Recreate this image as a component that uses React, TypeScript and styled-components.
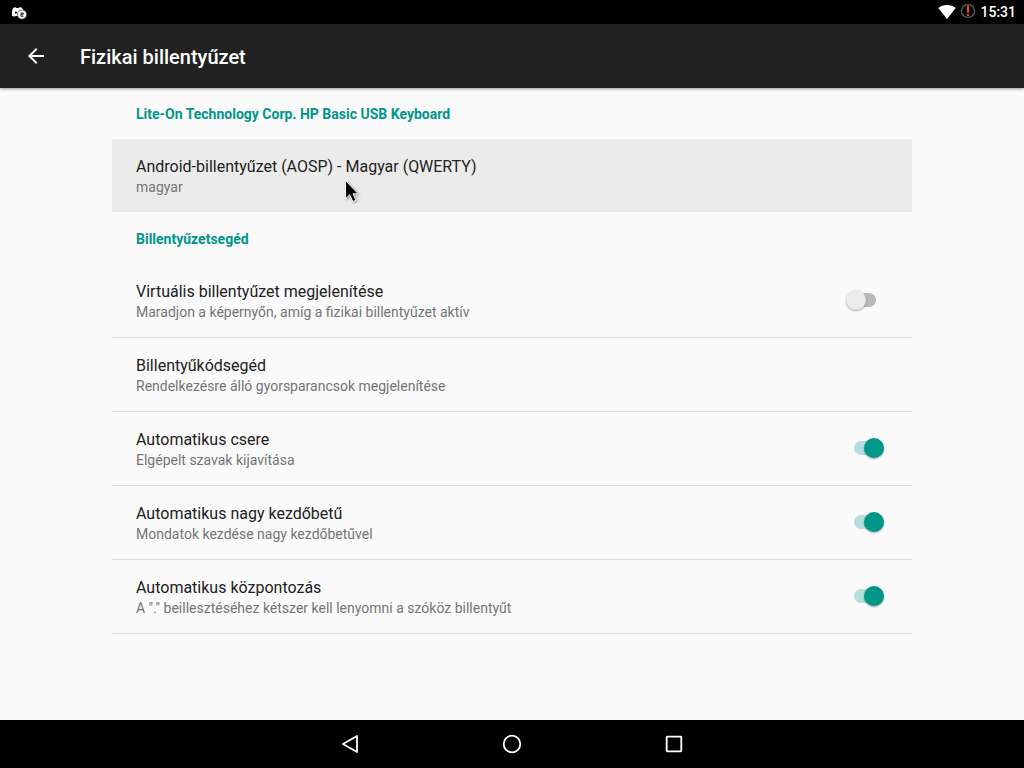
import React, { useState } from "react";
import styled, { createGlobalStyle } from "styled-components";

const GlobalStyle = createGlobalStyle`
  * { box-sizing: border-box; }
  body {
    margin: 0;
    background: #fafafa;
    color: #212121;
    font-family: Roboto, "Noto Sans", sans-serif;
  }
  h1, h2, p { margin: 0; }
`;

const Screen = styled.div`
  display: flex;
  flex-direction: column;
  min-height: 100vh;
`;

const StatusBar = styled.div`
  display: flex;
  align-items: center;
  height: 24px;
  padding: 0 8px 0 11px;
  background: #000;
  color: #fff;
`;

const StatusIcons = styled.div`
  display: flex;
  align-items: center;
  gap: 4px;
  margin-left: auto;
  svg { display: block; }
`;

const Clock = styled.time`
  font-size: 14px;
  line-height: 24px;
  font-weight: 500;
`;

const AppBar = styled.header`
  position: relative;
  display: flex;
  align-items: center;
  gap: 24px;
  height: 64px;
  padding: 0 16px;
  background: #212121;
  color: #fff;
  box-shadow: 0 1px 3px rgba(0, 0, 0, 0.4);
`;

const IconButton = styled.button`
  display: flex;
  align-items: center;
  justify-content: center;
  width: 40px;
  height: 40px;
  padding: 0;
  border: 0;
  background: none;
  color: inherit;
`;

const Title = styled.h1`
  font-size: 20px;
  line-height: 28px;
  font-weight: 500;
  padding-top: 2px;
`;

const Content = styled.main`
  flex: 1;
  padding: 0 112px;
`;

const SectionTitle = styled.h2`
  padding: 17px 24px 15px;
  font-size: 14px;
  line-height: 19px;
  font-weight: 700;
  color: #009688;
`;

const Row = styled.div<{ $active?: boolean }>`
  position: relative;
  display: flex;
  align-items: center;
  justify-content: space-between;
  padding: 14px 26px 15px 24px;
  border-bottom: 1px solid ${(p) => (p.$active ? "#fafafa" : "#dadada")};
  background: ${(p) => (p.$active ? "#ebebeb" : "transparent")};
`;

const RowButton = styled.button`
  display: block;
  padding: 3px 0 0;
  border: 0;
  background: none;
  color: inherit;
  font: inherit;
  text-align: left;
`;

const RowLabel = styled.label`
  display: block;
  padding-top: 3px;
`;

const RowTitle = styled.span`
  display: block;
  font-size: 16px;
  line-height: 22px;
`;

const Summary = styled.span`
  display: block;
  font-size: 14px;
  line-height: 19px;
  color: #757575;
`;

const Switch = styled.input`
  appearance: none;
  display: flex;
  align-items: center;
  flex: none;
  width: 40px;
  height: 20px;
  margin: 0;
  padding: 0 0 0 8px;

  &::before {
    content: "";
    flex: none;
    width: 22px;
    height: 14px;
    border-radius: 7px;
    background: #b9b9b9;
  }
  &::after {
    content: "";
    flex: none;
    width: 20px;
    height: 20px;
    margin-left: -30px;
    border-radius: 50%;
    background: #ececec;
    box-shadow: 0 1px 2px rgba(0, 0, 0, 0.35);
  }
  &:checked::before { background: #b2dfdb; }
  &:checked::after {
    margin-left: -12px;
    background: #009688;
  }
`;

const Pointer = styled.svg`
  position: absolute;
  left: 231px;
  top: 40px;
  filter: drop-shadow(1px 1px 1px rgba(0, 0, 0, 0.4));
  pointer-events: none;
`;

const NavBar = styled.nav`
  display: flex;
  justify-content: center;
  height: 48px;
  background: #000;
`;

const NavButton = styled.button`
  display: flex;
  align-items: center;
  justify-content: center;
  width: 162px;
  padding: 0;
  border: 0;
  background: none;
`;

type Option = { id: string; title: string; summary: string; on?: boolean };

const options: Option[] = [
  { id: "virtual", title: "Virtuális billentyűzet megjelenítése", summary: "Maradjon a képernyőn, amíg a fizikai billentyűzet aktív", on: false },
  { id: "shortcuts", title: "Billentyűkódsegéd", summary: "Rendelkezésre álló gyorsparancsok megjelenítése" },
  { id: "replace", title: "Automatikus csere", summary: "Elgépelt szavak kijavítása", on: true },
  { id: "caps", title: "Automatikus nagy kezdőbetű", summary: "Mondatok kezdése nagy kezdőbetűvel", on: true },
  { id: "punctuate", title: "Automatikus központozás", summary: "A \".\" beillesztéséhez kétszer kell lenyomni a szóköz billentyűt", on: true },
];

function OptionRow({ option }: { option: Option }) {
  const [on, setOn] = useState(option.on ?? false);
  const text = (
    <>
      <RowTitle>{option.title}</RowTitle>
      <Summary>{option.summary}</Summary>
    </>
  );
  if (option.on === undefined) {
    return <Row><RowButton type="button">{text}</RowButton></Row>;
  }
  return (
    <Row>
      <RowLabel htmlFor={option.id}>{text}</RowLabel>
      <Switch id={option.id} type="checkbox" checked={on} onChange={(e) => setOn(e.target.checked)} />
    </Row>
  );
}

export default function App() {
  return (
    <Screen>
      <GlobalStyle />
      <StatusBar>
        <svg width="17" height="16" viewBox="0 0 17 16" aria-hidden="true">
          <path d="M1 12V8C1 5.500 2 3.700 4 3l1.200 1h2.600L9 3c2 .5 3.500 2 3.500 5v4H5l-1.500.5z" fill="#fff" />
          <circle cx="5" cy="8.500" r="1.100" fill="#000" />
          <circle cx="11" cy="10.500" r="4.900" fill="#777" />
          <circle cx="11" cy="10.500" r="4" fill="#fff" />
          <path d="M9.600 9h2.600v1.300H9.900v1.900h2.600" fill="none" stroke="#000" strokeWidth="0.900" />
        </svg>
        <StatusIcons>
          <svg width="18" height="16" viewBox="0 0 18 16" aria-hidden="true">
            <path d="M9 15 .3 4C2.700 2 5.600 1 9 1s6.300 1 8.700 3z" fill="#fff" />
          </svg>
          <svg width="16" height="16" viewBox="0 0 16 16" aria-hidden="true">
            <circle cx="8" cy="7" r="6.500" fill="none" stroke="#4d4d4d" strokeWidth="1.600" />
            <path d="M8 1.500v7.200M8 10v2" stroke="#f4511e" strokeWidth="2" />
          </svg>
          <Clock>15:31</Clock>
        </StatusIcons>
      </StatusBar>
      <AppBar>
        <IconButton type="button" aria-label="Vissza">
          <svg width="24" height="24" viewBox="0 0 24 24" aria-hidden="true">
            <path d="M20 11H7.830l5.590-5.590L12 4l-8 8 8 8 1.410-1.410L7.830 13H20z" fill="#fff" />
          </svg>
        </IconButton>
        <Title>Fizikai billentyűzet</Title>
      </AppBar>
      <Content>
        <SectionTitle>Lite-On Technology Corp. HP Basic USB Keyboard</SectionTitle>
        <Row $active>
          <RowButton type="button">
            <RowTitle>Android-billentyűzet (AOSP) - Magyar (QWERTY)</RowTitle>
            <Summary>magyar</Summary>
          </RowButton>
          <Pointer width="18" height="26" viewBox="0 0 18 26" aria-hidden="true">
            <path d="M2.500 1.500v18.300l4.200-4 3.100 6.800 3.200-1.500-3-6.300h5.200z" fill="#000" stroke="#fff" strokeWidth="1" />
          </Pointer>
        </Row>
        <SectionTitle>Billentyűzetsegéd</SectionTitle>
        {options.map((option) => (
          <OptionRow key={option.id} option={option} />
        ))}
      </Content>
      <NavBar>
        <NavButton type="button" aria-label="Vissza">
          <svg width="24" height="24" viewBox="0 0 24 24" aria-hidden="true">
            <path d="M19 4v16L5 12z" fill="none" stroke="#fff" strokeWidth="1.800" strokeLinejoin="round" />
          </svg>
        </NavButton>
        <NavButton type="button" aria-label="Kezdőképernyő">
          <svg width="24" height="24" viewBox="0 0 24 24" aria-hidden="true">
            <circle cx="12" cy="12" r="8.300" fill="none" stroke="#fff" strokeWidth="1.800" />
          </svg>
        </NavButton>
        <NavButton type="button" aria-label="Áttekintés">
          <svg width="24" height="24" viewBox="0 0 24 24" aria-hidden="true">
            <rect x="4.700" y="4.700" width="14.600" height="14.600" rx="0.500" fill="none" stroke="#fff" strokeWidth="1.800" />
          </svg>
        </NavButton>
      </NavBar>
    </Screen>
  );
}
